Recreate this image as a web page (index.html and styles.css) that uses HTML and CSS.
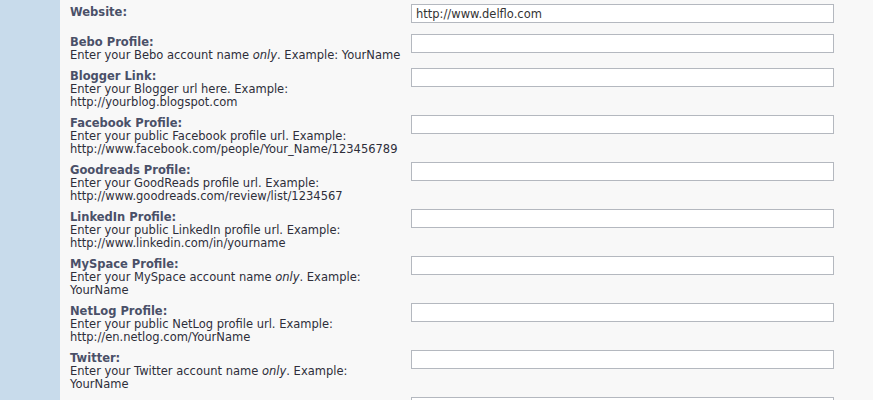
FILE: index.html
```html
<!DOCTYPE html>
<html lang="en">
<head>
    <meta charset="UTF-8">
    <meta name="viewport" content="width=device-width, initial-scale=1.0">
    <title>Edit Profile</title>
    <link rel="stylesheet" href="styles.css">
</head>
<body>
    <div class="page">
        <div class="sidebar"></div>
        <div class="main">
            <div class="field">
                <div class="info">
                    <div class="label">Website:</div>
                </div>
                <input type="text" value="http://www.delflo.com">
            </div>
            <div class="field">
                <div class="info">
                    <div class="label">Bebo Profile:</div>
                    <div class="desc">Enter your Bebo account name <em>only</em>. Example: YourName</div>
                </div>
                <input type="text">
            </div>
            <div class="field">
                <div class="info">
                    <div class="label">Blogger Link:</div>
                    <div class="desc">Enter your Blogger url here. Example: http://yourblog.blogspot.com</div>
                </div>
                <input type="text">
            </div>
            <div class="field">
                <div class="info">
                    <div class="label">Facebook Profile:</div>
                    <div class="desc">Enter your public Facebook profile url. Example: http://www.facebook.com/people/Your_Name/123456789</div>
                </div>
                <input type="text">
            </div>
            <div class="field">
                <div class="info">
                    <div class="label">Goodreads Profile:</div>
                    <div class="desc">Enter your GoodReads profile url. Example: http://www.goodreads.com/review/list/1234567</div>
                </div>
                <input type="text">
            </div>
            <div class="field">
                <div class="info">
                    <div class="label">LinkedIn Profile:</div>
                    <div class="desc">Enter your public LinkedIn profile url. Example: http://www.linkedin.com/in/yourname</div>
                </div>
                <input type="text">
            </div>
            <div class="field">
                <div class="info">
                    <div class="label">MySpace Profile:</div>
                    <div class="desc">Enter your MySpace account name <em>only</em>. Example: YourName</div>
                </div>
                <input type="text">
            </div>
            <div class="field">
                <div class="info">
                    <div class="label">NetLog Profile:</div>
                    <div class="desc">Enter your public NetLog profile url. Example: http://en.netlog.com/YourName</div>
                </div>
                <input type="text">
            </div>
            <div class="field">
                <div class="info">
                    <div class="label">Twitter:</div>
                    <div class="desc">Enter your Twitter account name <em>only</em>. Example: YourName</div>
                </div>
                <input type="text">
            </div>
            <div class="field">
                <div class="info"></div>
                <input type="text">
            </div>
        </div>
    </div>
</body>
</html>
```

FILE: styles.css
```css
body {
    margin: 0;
    padding: 0;
    font-family: 'DejaVu Sans', Verdana, sans-serif;
    font-size: 11.5px;
    line-height: 13px;
    color: #333;
    background-color: #f8f8f8;
}

.page {
    display: flex;
    height: 400px;
    overflow: hidden;
}

.sidebar {
    width: 60px;
    flex-shrink: 0;
    background-color: #c8dbeb;
}

.main {
    flex: 1;
    padding: 0 0 0 10px;
    background-color: #f8f8f8;
}

.field {
    display: grid;
    grid-template-columns: 335px 423px;
    column-gap: 6px;
    align-items: start;
    padding: 4px 0 2px 0;
}

.info {
    padding-top: 2px;
}

.label {
    font-weight: bold;
    color: #4a5068;
}

.desc {
    color: #2e2e3a;
}

input[type="text"] {
    display: block;
    box-sizing: border-box;
    width: 423px;
    height: 19px;
    margin: 0 0 5px 0;
    padding: 0 4px;
    border: 1px solid #b4b8bf;
    background-color: #fff;
    font-family: 'DejaVu Sans', Verdana, sans-serif;
    font-size: 11.5px;
    color: #333;
}
```
